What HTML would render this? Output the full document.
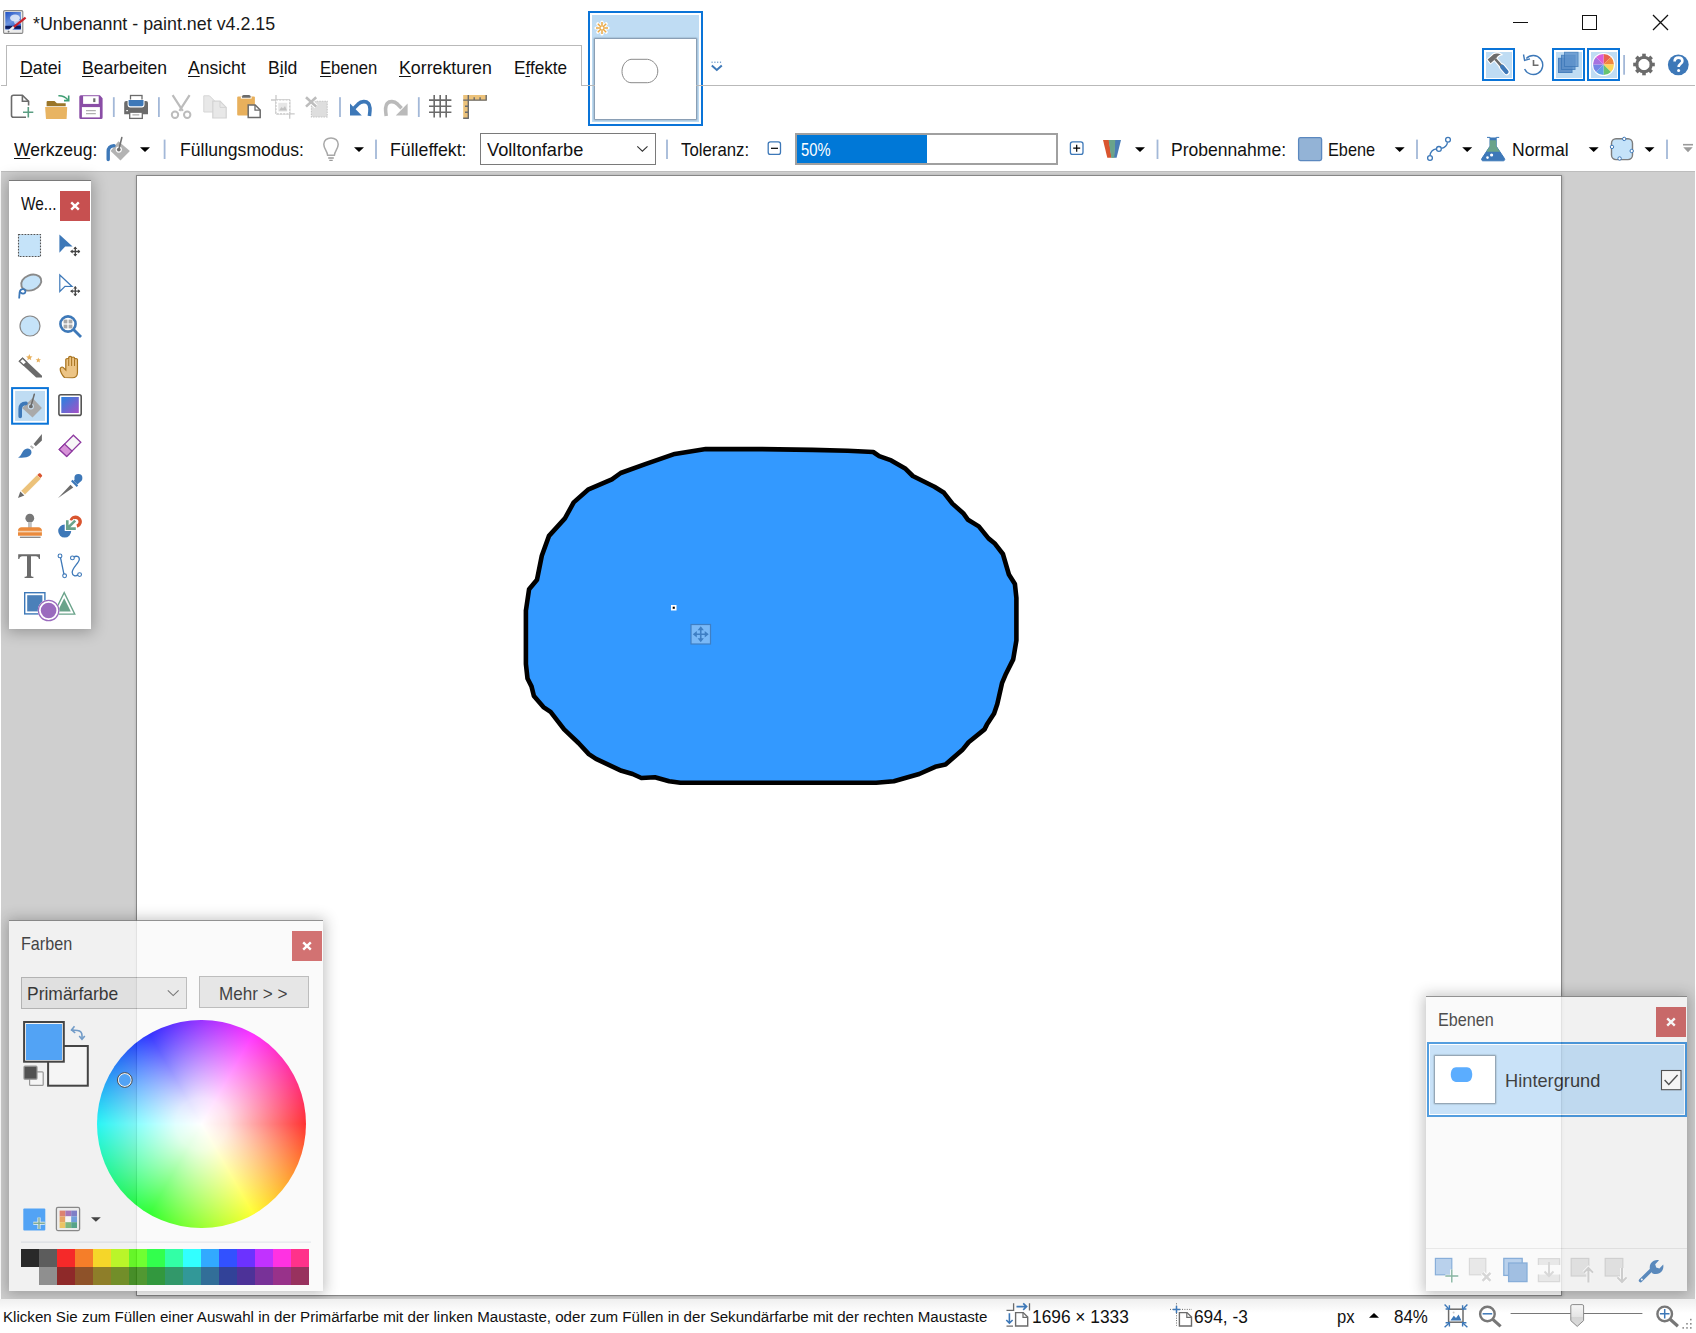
<!DOCTYPE html>
<html><head><meta charset="utf-8"><style>
*{margin:0;padding:0;box-sizing:border-box}
html,body{width:1696px;height:1333px;overflow:hidden;background:#fff}
body{position:relative;font-family:"Liberation Sans",sans-serif;color:#000}
.a{position:absolute}
.t{position:absolute;white-space:nowrap;line-height:1;font-size:17.5px}
.u{text-decoration:underline;text-underline-offset:2px;text-decoration-thickness:1px}
svg{position:absolute;overflow:visible}
</style></head><body>
<svg style="left:3px;top:10px;" width="21" height="24" viewBox="0 0 21 24">
<defs><linearGradient id="ico" x1="0" y1="0" x2="0.6" y2="1"><stop offset="0" stop-color="#1d4fc4"/><stop offset=".55" stop-color="#6c93de"/><stop offset="1" stop-color="#2a5ad0"/></linearGradient></defs>
<rect x="0.6" y="0.6" width="19.2" height="22.8" rx="1.2" fill="#ececec" stroke="#888" stroke-width="1.1"/>
<rect x="2.3" y="2" width="15.6" height="17.6" fill="url(#ico)"/>
<ellipse cx="12" cy="8" rx="5" ry="3.5" fill="#e8eefa" opacity=".85"/>
<ellipse cx="14.5" cy="12" rx="3.5" ry="2.5" fill="#dfe8f8" opacity=".7"/>
<rect x="2.3" y="15.8" width="15.6" height="3" fill="#0b1a5a"/>
<path d="M22.6 7.6L10.6 17.2" stroke="#c9222c" stroke-width="2.2"/>
<path d="M10.8 17L6 21.2" stroke="#f2f2f2" stroke-width="2.4"/>
<path d="M6.2 21L5 22.2" stroke="#777" stroke-width="1.6"/>
</svg>
<div class="t" style="left:32.70px;top:15.00px;font-size:18.2px;color:#1a1a1a;transform:scaleX(0.9818);transform-origin:0 0;">*Unbenannt - paint.net v4.2.15</div>
<div class="a" style="left:1513px;top:22px;width:15px;height:1.3px;background:#111"></div>
<div class="a" style="left:1582px;top:15px;width:15px;height:15px;border:1.3px solid #111"></div>
<svg style="left:1653px;top:15px;" width="15" height="15" viewBox="0 0 15 15"><path d="M0 0L15 15M15 0L0 15" stroke="#111" stroke-width="1.3"/></svg>
<div class="a" style="left:6px;top:45px;width:1px;height:41px;background:#b9b9b9"></div>
<div class="a" style="left:6px;top:45px;width:576px;height:1px;background:#b9b9b9"></div>
<div class="a" style="left:581px;top:45px;width:1px;height:41px;background:#b9b9b9"></div>
<div class="a" style="left:1px;top:85px;width:6px;height:1px;background:#b9b9b9"></div>
<div class="a" style="left:581px;top:85px;width:1114px;height:1px;background:#b9b9b9"></div>
<div class="t" style="left:20.00px;top:59.00px;font-size:18.2px;color:#111;transform:scaleX(0.9762);transform-origin:0 0;"><span class=u>D</span>atei</div>
<div class="t" style="left:82.00px;top:59.00px;font-size:18.2px;color:#111;transform:scaleX(0.9659);transform-origin:0 0;"><span class=u>B</span>earbeiten</div>
<div class="t" style="left:188.00px;top:59.00px;font-size:18.2px;color:#111;transform:scaleX(0.9667);transform-origin:0 0;"><span class=u>A</span>nsicht</div>
<div class="t" style="left:268.00px;top:59.00px;font-size:18.2px;color:#111;transform:scaleX(0.9667);transform-origin:0 0;">B<span class=u>i</span>ld</div>
<div class="t" style="left:319.50px;top:59.00px;font-size:18.2px;color:#111;transform:scaleX(0.9143);transform-origin:0 0;"><span class=u>E</span>benen</div>
<div class="t" style="left:398.50px;top:59.00px;font-size:18.2px;color:#111;transform:scaleX(0.9768);transform-origin:0 0;"><span class=u>K</span>orrekturen</div>
<div class="t" style="left:514.00px;top:59.00px;font-size:18.2px;color:#111;transform:scaleX(0.9429);transform-origin:0 0;">E<span class=u>f</span>fekte</div>
<svg style="left:0;top:0" width="1696" height="140" viewBox="0 0 1696 140">
<path d="M26 117.2H13.5a2 2 0 0 1-2-2V97.3a2 2 0 0 1 2-2H22.4L28.6 101.4V105.5" fill="none" stroke="#6b6b6b" stroke-width="1.6"/>
<path d="M22.4 95.3V101.2H28.6" fill="none" stroke="#6b6b6b" stroke-width="1.6"/>
<path d="M28.3 107.1V117.6M23 112.3H33.3" stroke="#5a9e82" stroke-width="1.6"/>
<path d="M46.6 106.2V102a1 1 0 0 1 1-1H54.5L56.9 103.3H65.7V106.2Z" fill="#9a7528"/>
<path d="M45.1 107.1H67.2L66.6 118.9H46Z" fill="#e8b462"/>
<path d="M58.4 95.8C62 95.6 64.5 96 67.8 99.8" fill="none" stroke="#3f9e74" stroke-width="1.6"/>
<path d="M64 100.6H68.7V95.6" fill="none" stroke="#3f9e74" stroke-width="1.6"/>
<path d="M80.8 95.3H99.9L102.6 98.3V117.4a1.5 1.5 0 0 1-1.5 1.5H80.8a1.5 1.5 0 0 1-1.5-1.5V96.8a1.5 1.5 0 0 1 1.5-1.5Z" fill="#8a4da6"/>
<rect x="83.1" y="96.2" width="15.6" height="7.7" fill="#fff"/>
<rect x="93.2" y="98.3" width="2.2" height="3.8" fill="#6b6b6b"/>
<rect x="81.9" y="107.1" width="18" height="10.3" fill="#fff"/>
<path d="M86 110.6H95.8M86 113.6H95.8" stroke="#b0b0b0" stroke-width="1.1"/>
<rect x="112.89999999999999" y="97.2" width="1.8" height="19.8" fill="#a3b8d8"/>
<rect x="158.0" y="97.2" width="1.8" height="19.8" fill="#a3b8d8"/>
<rect x="339.1" y="97.2" width="1.8" height="19.8" fill="#a3b8d8"/>
<rect x="417.90000000000003" y="97.2" width="1.8" height="19.8" fill="#a3b8d8"/>
<rect x="130.5" y="95.5" width="11.5" height="6" fill="#fff" stroke="#6b6b6b" stroke-width="1.3"/>
<path d="M124.2 103a2 2 0 0 1 2-2H146a2 2 0 0 1 2 2V114.2H124.2Z" fill="#6b6b6b"/>
<path d="M127.6 99.4H144.5V105a2.4 2.4 0 0 1-2.4 2.4H130a2.4 2.4 0 0 1-2.4-2.4Z" fill="#fff"/>
<path d="M128.6 100H143.5V104.6a1.6 1.6 0 0 1-1.6 1.6H130.2a1.6 1.6 0 0 1-1.6-1.6Z" fill="#3d78b8"/>
<rect x="129.7" y="112.2" width="12.6" height="6.2" fill="#fff" stroke="#6b6b6b" stroke-width="1.3"/>
<path d="M132.4 114.9H139.3" stroke="#9a9a9a" stroke-width="1"/>
<rect x="126.3" y="110" width="1.6" height="1.2" fill="#fff"/>
<path d="M172.6 95.2L182.8 110.8M189.6 95.2L179.4 110.8" stroke="#bcbcbc" stroke-width="2.2"/>
<circle cx="175" cy="114.8" r="3.2" fill="none" stroke="#bcbcbc" stroke-width="2"/>
<circle cx="187.2" cy="114.8" r="3.2" fill="none" stroke="#bcbcbc" stroke-width="2"/>
<path d="M203.8 95.8H209.5L215 101.3V112H203.8Z" fill="#e8e8e8" stroke="#d6d6d6" stroke-width="1"/>
<path d="M212.8 101.2H220L226.2 107.4V118H212.8Z" fill="#e8e8e8" stroke="#d3d3d3" stroke-width="1.2"/>
<path d="M220 101.2V107.4H226.2" fill="none" stroke="#d3d3d3" stroke-width="1"/>
<rect x="237.2" y="96.4" width="17.7" height="19.2" rx="1" fill="#e8b05c"/>
<path d="M240.8 96.6H251.6V98.6H240.8Z" fill="#fff"/>
<path d="M242 97.8V96.6a1.6 1.6 0 0 1 1.6-1.6H249a1.6 1.6 0 0 1 1.6 1.6V97.8Z" fill="#6b6b6b"/>
<path d="M248.2 105H255.2L260.2 110V117.6H248.2Z" fill="#fff" stroke="#6b6b6b" stroke-width="1.5"/>
<path d="M255 105V110.2H260.2" fill="none" stroke="#6b6b6b" stroke-width="1.3"/>
<path d="M276 95V114M271 100H290M289.7 100V118.8M276 113.8H294.7" stroke="#c9c9c9" stroke-width="1.3"/>
<rect x="276" y="100" width="13.7" height="13.8" fill="#fff" stroke="#c9c9c9" stroke-width="1.2" stroke-dasharray="2 1.2"/>
<rect x="278.3" y="102.8" width="9" height="8.7" fill="#e6e6e6"/>
<path d="M279 110.5L281.5 107L283 108.5L285 106L287 110.5Z" fill="#c2c2c2"/>
<rect x="311.4" y="101.2" width="15.8" height="15.8" fill="#dedede" stroke="#c6c6c6" stroke-width="1.1" stroke-dasharray="1.6 1"/>
<path d="M306 97.2L316.2 106.6M316.2 97.2L306 106.6" stroke="#fff" stroke-width="4.4"/>
<path d="M306 97.2L316.2 106.6M316.2 97.2L306 106.6" stroke="#bdbdbd" stroke-width="2.6"/>
<path d="M369.4 116C370.2 111 370.6 106 368.4 103.5C366 100.8 361.5 101 358 104.2L354 108.2" fill="none" stroke="#3d78b8" stroke-width="3.6"/>
<path d="M350 103.6V115.6H361.8Z" fill="#3d78b8"/>
<path d="M386.2 116C385.4 111 385 106 387.2 103.5C389.6 100.8 394.1 101 397.6 104.2L401.6 108.2" fill="none" stroke="#bababa" stroke-width="3.6"/>
<path d="M407.6 103.6V115.6H395.8Z" fill="#bababa"/>
<path d="M434.2 95V117.4M440.2 95V117.4M446.2 95V117.4M429 100.1H451.4M429 106.3H451.4M429 112.2H451.4" stroke="#6b6b6b" stroke-width="1.6"/>
<path d="M463.2 95H486.7V100.6H468.6V118.8H463.2Z" fill="#ecc27a"/>
<path d="M463.2 100.1H486.7M468.3 95V118.8M463.2 118.2H468.6M486.2 95V100.6M474.2 100.1V97.3M480.1 100.1V97.3M468.3 106.3H465M468.3 112.2H465" stroke="#6b6b6b" stroke-width="1.4" fill="none"/>
</svg>
<div class="a" style="left:588px;top:11px;width:115px;height:115px;border:2px solid #0a74d8;background:#fff"></div>
<div class="a" style="left:592px;top:15px;width:107px;height:107px;background:#bfdcf3"></div>
<div class="a" style="left:594.6px;top:39.4px;width:101.6px;height:79.8px;background:#fff;box-shadow:0 0 1.5px 0.8px rgba(60,70,90,.55)"></div>
<svg style="left:0;top:0" width="760" height="140" viewBox="0 0 760 140">
<g stroke="#fff" stroke-width="3.2" stroke-linecap="round"><path d="M602 22V34M596 28H608M597.8 23.8L606.2 32.2M606.2 23.8L597.8 32.2"/></g>
<g stroke="#e8a845" stroke-width="1.5"><path d="M602 22V34M596 28H608M597.8 23.8L606.2 32.2M606.2 23.8L597.8 32.2"/></g>
<circle cx="602" cy="28" r="1.4" fill="#fff"/>
<path d="M631 59.3H647.5C653 60 657.8 65 657.8 71C657.8 77.5 653 82.5 647.5 82.7H631C626 82.5 622 77.5 622 71.5C622 65 626 60 631 59.3Z" fill="#fff" stroke="#8a8a8a" stroke-width="1"/>
<path d="M711.5 62.2H722" stroke="#3d78b8" stroke-width="1" stroke-dasharray="1.2 1.6"/>
<path d="M711.8 65.5L716.8 70L721.8 65.5" fill="none" stroke="#3d78b8" stroke-width="2"/>
</svg>
<div class="a" style="left:1482px;top:48px;width:33px;height:33px;border:2px solid #0a74d8;background:#fff"></div>
<div class="a" style="left:1485.5px;top:51.5px;width:26px;height:26px;background:#bfdcf3"></div>
<div class="a" style="left:1552px;top:48px;width:33px;height:33px;border:2px solid #0a74d8;background:#fff"></div>
<div class="a" style="left:1555.5px;top:51.5px;width:26px;height:26px;background:#bfdcf3"></div>
<div class="a" style="left:1587px;top:48px;width:33px;height:33px;border:2px solid #0a74d8;background:#fff"></div>
<div class="a" style="left:1590.5px;top:51.5px;width:26px;height:26px;background:#bfdcf3"></div>
<svg style="left:1460px;top:40px" width="236" height="50" viewBox="1460 40 236 50">
<path d="M1487.6 59.6L1490.6 63.2L1494.8 59.6L1496.8 57.4C1498 55.6 1499.4 55 1501 54.6C1499 53.2 1496 53 1493.6 54.2L1491.4 56.2Z" fill="#fff" stroke="#fff" stroke-width="2"/>
<path d="M1495.2 59L1501.5 66.2" stroke="#fff" stroke-width="4.6"/><path d="M1502 66.6L1506.6 72" stroke="#fff" stroke-width="6.4" stroke-linecap="round"/>
<path d="M1487.6 59.6L1490.6 63.2L1494.8 59.6L1496.8 57.4C1498 55.6 1499.4 55 1501 54.6C1499 53.2 1496 53 1493.6 54.2L1491.4 56.2Z" fill="#6b6b6b"/>
<path d="M1495.2 59L1501.5 66.2" stroke="#6b6b6b" stroke-width="2.6"/>
<path d="M1502.2 66.8L1506.4 71.8" stroke="#3d78b8" stroke-width="4.4" stroke-linecap="round"/>
<path d="M1526.3 58.5A9.5 9.5 0 1 1 1524.6 69" fill="none" stroke="#3d78b8" stroke-width="1.4"/>
<path d="M1523.5 54.5L1524.6 60.4L1530 58.8" fill="none" stroke="#3d78b8" stroke-width="1.4"/>
<path d="M1533.5 60V65.3H1538.5" fill="none" stroke="#6b6b6b" stroke-width="1.6"/>
<rect x="1558.5" y="58.3" width="13.5" height="14.2" fill="#5a8bc4" stroke="#3d78b8" stroke-width="1" opacity=".9"/>
<rect x="1561.5" y="55.3" width="13.5" height="14.2" fill="#5b8fc9" stroke="#3d78b8" stroke-width="1" opacity=".85"/>
<rect x="1564.5" y="52.3" width="13.5" height="14.2" fill="#5f93cc" stroke="#3d78b8" stroke-width="1" opacity=".8"/>
<circle cx="1603.5" cy="64.5" r="11.5" fill="#fff"/>
<path d="M1603.5 64.5L1603.50 54.00A10.5 10.5 0 0 1 1610.92 57.08Z" fill="#e8624f"/>
<path d="M1603.5 64.5L1610.92 57.08A10.5 10.5 0 0 1 1614.00 64.50Z" fill="#f0883f"/>
<path d="M1603.5 64.5L1614.00 64.50A10.5 10.5 0 0 1 1610.92 71.92Z" fill="#fdd75a"/>
<path d="M1603.5 64.5L1610.92 71.92A10.5 10.5 0 0 1 1603.50 75.00Z" fill="#66c470"/>
<path d="M1603.5 64.5L1603.50 75.00A10.5 10.5 0 0 1 1596.08 71.92Z" fill="#5fa1e8"/>
<path d="M1603.5 64.5L1596.08 71.92A10.5 10.5 0 0 1 1593.00 64.50Z" fill="#7486e6"/>
<path d="M1603.5 64.5L1593.00 64.50A10.5 10.5 0 0 1 1596.08 57.08Z" fill="#a772df"/>
<path d="M1603.5 64.5L1596.08 57.08A10.5 10.5 0 0 1 1603.50 54.00Z" fill="#d85ddb"/>
<rect x="1623.2" y="55" width="1.8" height="19.7" fill="#a3b8d8"/>
<rect x="-1.8" y="-10.8" width="3.6" height="5" transform="translate(1644 64.5) rotate(0)" fill="#6b6b6b"/><rect x="-1.8" y="-10.8" width="3.6" height="5" transform="translate(1644 64.5) rotate(45)" fill="#6b6b6b"/><rect x="-1.8" y="-10.8" width="3.6" height="5" transform="translate(1644 64.5) rotate(90)" fill="#6b6b6b"/><rect x="-1.8" y="-10.8" width="3.6" height="5" transform="translate(1644 64.5) rotate(135)" fill="#6b6b6b"/><rect x="-1.8" y="-10.8" width="3.6" height="5" transform="translate(1644 64.5) rotate(180)" fill="#6b6b6b"/><rect x="-1.8" y="-10.8" width="3.6" height="5" transform="translate(1644 64.5) rotate(225)" fill="#6b6b6b"/><rect x="-1.8" y="-10.8" width="3.6" height="5" transform="translate(1644 64.5) rotate(270)" fill="#6b6b6b"/><rect x="-1.8" y="-10.8" width="3.6" height="5" transform="translate(1644 64.5) rotate(315)" fill="#6b6b6b"/>
<circle cx="1644" cy="64.5" r="7.2" fill="none" stroke="#6b6b6b" stroke-width="3"/>
<circle cx="1678.3" cy="64.8" r="10.4" fill="#3d78b8"/>
<path d="M1674.6 61.6C1674.6 59 1676.4 57.6 1678.5 57.6C1680.8 57.6 1682.4 59 1682.4 61C1682.4 63.8 1678.6 63.8 1678.6 67" fill="none" stroke="#fff" stroke-width="2.6"/>
<circle cx="1678.6" cy="70.6" r="1.5" fill="#fff"/>
</svg>
<div class="a" style="left:581px;top:85px;width:13.6px;height:1px;background:#b9b9b9"></div>
<div class="a" style="left:696.2px;top:85px;width:7px;height:1px;background:#b9b9b9"></div>
<div class="t" style="left:14.20px;top:141.00px;font-size:18.2px;color:#111;transform:scaleX(0.9621);transform-origin:0 0;"><span class=u>W</span>erkzeug:</div>
<div class="t" style="left:180.40px;top:141.00px;font-size:18.2px;color:#111;transform:scaleX(0.9656);transform-origin:0 0;">Füllungsmodus:</div>
<div class="t" style="left:390.00px;top:141.00px;font-size:18.2px;color:#111;transform:scaleX(0.9744);transform-origin:0 0;">Fülleffekt:</div>
<div class="t" style="left:680.70px;top:141.00px;font-size:18.2px;color:#111;transform:scaleX(0.9230);transform-origin:0 0;">Toleranz:</div>
<div class="t" style="left:1171.30px;top:141.00px;font-size:18.2px;color:#111;transform:scaleX(0.9639);transform-origin:0 0;">Probennahme:</div>
<div class="t" style="left:1328.30px;top:141.00px;font-size:18.2px;color:#111;transform:scaleX(0.8962);transform-origin:0 0;">Ebene</div>
<div class="t" style="left:1512.00px;top:141.00px;font-size:18.2px;color:#111;transform:scaleX(0.9661);transform-origin:0 0;">Normal</div>
<div class="a" style="left:480px;top:133px;width:176px;height:32px;border:1px solid #7a7a7a;background:#fff"></div>
<div class="t" style="left:486.50px;top:141.00px;font-size:18.2px;color:#111;transform:scaleX(1.0031);transform-origin:0 0;">Volltonfarbe</div>
<div class="a" style="left:795px;top:133px;width:263px;height:32px;border:2px solid #a0a0a0;background:#fff"></div>
<div class="a" style="left:797px;top:135px;width:129.5px;height:28px;background:#0078d7"></div>
<div class="t" style="left:800.80px;top:141.00px;font-size:18.2px;color:#fff;transform:scaleX(0.8111);transform-origin:0 0;">50%</div>
<svg style="left:0;top:0" width="1696" height="170" viewBox="0 0 1696 170">
<path d="M637.3 146.3L642.4 151.2L647.5 146.3" fill="none" stroke="#333" stroke-width="1.1"/>
<path d="M110.6 150.9L118.4 141.3L129.9 150.9L120.5 160.6Z" fill="#b3b3b3"/>
<path d="M108.2 159.5V151.5C108.2 148 110.5 146 114 145.6" fill="none" stroke="#3d78b8" stroke-width="3.4" stroke-linecap="round"/>
<circle cx="118.8" cy="149.6" r="3.1" fill="#fff"/>
<path d="M121.8 137.6L118.8 149.6" stroke="#707070" stroke-width="1.6" stroke-linecap="round"/>
<circle cx="118.8" cy="149.6" r="1.9" fill="#707070"/>
<path d="M140 147.2H150L145 151.9Z" fill="#000"/>
<path d="M354 147.2H364L359 151.9Z" fill="#000"/>
<path d="M1135 147.2H1145L1140 151.9Z" fill="#000"/>
<path d="M1394.7 147.2H1404.7L1399.7 151.9Z" fill="#000"/>
<path d="M1462.2 147.2H1472.2L1467.2 151.9Z" fill="#000"/>
<path d="M1588.7 147.2H1598.7L1593.7 151.9Z" fill="#000"/>
<path d="M1644.5 147.2H1654.5L1649.5 151.9Z" fill="#000"/>
<rect x="163.7" y="139.6" width="1.8" height="19.4" fill="#a3b8d8"/>
<rect x="375.1" y="139.6" width="1.8" height="19.4" fill="#a3b8d8"/>
<rect x="666.1" y="139.6" width="1.8" height="19.4" fill="#a3b8d8"/>
<rect x="1156.6" y="139.6" width="1.8" height="19.4" fill="#a3b8d8"/>
<rect x="1416.1" y="139.6" width="1.8" height="19.4" fill="#a3b8d8"/>
<rect x="1666.1" y="139.6" width="1.8" height="19.4" fill="#a3b8d8"/>
<path d="M327.6 155.3C327.3 151 323.8 149 323.8 144.3C323.8 140.5 327 137.9 331 137.9C335 137.9 338.2 140.5 338.2 144.3C338.2 149 334.7 151 334.4 155.3Z" fill="#fff" stroke="#a8a8a8" stroke-width="1.5"/>
<path d="M328.2 158H333.8M329.3 160.3H332.7" stroke="#9a9a9a" stroke-width="1.3"/>
<rect x="768.2" y="141.8" width="12.3" height="12.6" rx="2.2" fill="#fff" stroke="#3d78b8" stroke-width="1.3"/>
<path d="M771 148.3H778" stroke="#000" stroke-width="1.2"/>
<rect x="1070.4" y="141.8" width="12.6" height="12.6" rx="2.2" fill="#fff" stroke="#3d78b8" stroke-width="1.3"/>
<path d="M1073.2 148.2H1080.2M1076.7 144.7V151.7" stroke="#000" stroke-width="1.2"/>
<path d="M1103 140.1H1109L1111.6 157.7H1107.3Z" fill="#d9552f"/>
<path d="M1109 140.1H1115L1113.8 157.7H1111.6Z" fill="#6aa38a"/>
<path d="M1115 140.1H1121L1116.6 157.7H1113.8Z" fill="#4a7db5"/>
<path d="M1108.6 140.1H1115.3L1114.3 157.7H1111.3Z" fill="#6aa38a"/>
<rect x="1298.6" y="137.6" width="23" height="23" rx="1.8" fill="#93b3d6" stroke="#5b88bf" stroke-width="1.3"/>
<path d="M1430 155.4C1430.5 151.5 1433 149.5 1436.4 148.9M1441.4 148.4C1445 147.5 1447 145.5 1447.5 142.3" fill="none" stroke="#3d78b8" stroke-width="1.3"/>
<circle cx="1430" cy="158" r="2.4" fill="#fff" stroke="#3d78b8" stroke-width="1.3"/>
<circle cx="1438.9" cy="148.9" r="2.4" fill="#fff" stroke="#3d78b8" stroke-width="1.3"/>
<circle cx="1448" cy="139.7" r="2.4" fill="#fff" stroke="#3d78b8" stroke-width="1.3"/>
<path d="M1487 137.4H1490V146.2L1481.8 158.6C1481.2 159.8 1481.8 160.8 1483 160.8H1503.3C1504.5 160.8 1505.1 159.8 1504.5 158.6L1496.2 146.2V137.4H1499.2" fill="#3d78b8" stroke="#3d78b8" stroke-width="1"/>
<path d="M1489.9 140.2H1496.3V146.3L1500 151.8H1486.2L1489.9 146.3Z" fill="#6aa38a"/>
<circle cx="1491.6" cy="155" r="1.6" fill="#fff"/><circle cx="1487.5" cy="157.6" r="1.3" fill="#fff"/>
<rect x="1611.5" y="138.8" width="21" height="20.8" rx="4.5" fill="#c5e3f9" stroke="#7d7d7d" stroke-width="1.4"/>
<circle cx="1624.2" cy="138.9" r="1.7" fill="#fff" stroke="#3d78b8" stroke-width="1"/>
<circle cx="1612" cy="146.9" r="1.7" fill="#fff" stroke="#3d78b8" stroke-width="1"/>
<circle cx="1631.7" cy="151" r="1.7" fill="#fff" stroke="#3d78b8" stroke-width="1"/>
<circle cx="1619.6" cy="158.5" r="1.7" fill="#fff" stroke="#3d78b8" stroke-width="1"/>
<rect x="1683" y="143.9" width="10" height="1.6" fill="#9a9a9a"/><path d="M1683.3 147.2H1692.7L1688 152.2Z" fill="#9a9a9a"/>
</svg>
<div class="a" style="left:1px;top:171px;width:1694px;height:1127.5px;background:#cfcfcf"></div>
<div class="a" style="left:1px;top:171px;width:1694px;height:1px;background:#bdbdbd"></div>
<div class="a" style="left:137px;top:176px;width:1424px;height:1119px;background:#fff;box-shadow:0 0 0 1px #868686, 0 0 3px 1.5px rgba(0,0,0,.22)"></div>
<svg style="left:0;top:0" width="1696" height="1333" viewBox="0 0 1696 1333"><path d="M705.8 449.1L760.0 449.1L812.5 449.9L847.6 450.7L873.2 452.0L879.2 456.2L891.2 460.4L905.6 468.8L912.8 476.0L934.4 486.8L944.0 492.8L952.4 503.6L963.2 513.2L968.0 519.8L978.8 526.4L988.5 538.4L994.5 543.2L1002.9 554.0L1008.9 574.5L1014.9 584.0L1016.4 598.0L1016.4 640.3L1013.2 659.4L1006.0 673.7L1002.0 683.2L997.3 704.0L994.1 713.5L986.9 724.6L984.5 729.4L968.6 742.2L962.2 750.1L945.5 764.5L935.2 766.8L919.2 774.0L893.8 781.2L876.2 782.8L680.4 782.8L669.2 781.2L654.9 777.2L641.4 778.0L632.6 774.0L621.5 770.8L596.0 758.9L588.8 754.1L578.5 743.0L564.1 729.4L550.6 711.9L543.4 707.1L533.9 696.0L531.5 686.4L527.5 678.5L525.9 664.1L525.9 610.0L526.0 610.0L529.1 589.2L537.0 579.7L541.8 555.8L549.0 535.9L564.9 518.4L573.7 502.4L588.0 489.7L611.9 479.4L620.7 473.0L645.3 464.2L674.8 453.9Z" fill="#3399ff" stroke="#000" stroke-width="4.6" stroke-linejoin="round"/>
<rect x="671" y="605" width="5.5" height="5.5" fill="#fff"/><rect x="672.7" y="606.7" width="2.1" height="2.1" fill="#000"/>
<rect x="691" y="624.5" width="19.5" height="19.5" fill="#7ab9f7" stroke="#3f7fc4" stroke-width="1.2"/>
<path d="M700.75 628V640.5M694.5 634.25H707" stroke="#3f7fc4" stroke-width="1.6"/>
<path d="M700.75 626.3L697.6 630.3H703.9Z M700.75 642.2L697.6 638.2H703.9Z M692.8 634.25L696.8 631.1V637.4Z M708.7 634.25L704.7 631.1V637.4Z" fill="#3f7fc4"/>
</svg>
<div class="a" style="left:9px;top:180px;width:82px;height:448.7px;background:#fff;box-shadow:0 1px 14px 2px rgba(0,0,0,.28);border-top:1px solid #7a7a7a"></div>
<div class="t" style="left:20.60px;top:195.00px;font-size:18.2px;color:#111;transform:scaleX(0.8429);transform-origin:0 0;">We...</div>
<div class="a" style="left:60px;top:191px;width:30px;height:30px;background:#c75050"></div>
<svg style="left:0;top:0" width="100" height="640" viewBox="0 0 100 640">
<path d="M71.2 202.4L78.8 209.6M78.8 202.4L71.2 209.6" stroke="#fff" stroke-width="2.4"/>
<rect x="18.5" y="234.5" width="22" height="22" fill="#c5e3f9" stroke="#555" stroke-width="1.1" stroke-dasharray="1.8 1.2"/>
<path d="M59.4 234.6L72.6 246.6H65.2L59.4 252.8Z" fill="#3d78b8"/>
<path d="M75.3 246.9V256.1M70.7 251.5H79.89999999999999" stroke="#444" stroke-width="1.3"/><path d="M75.3 246.5L73.3 248.9H77.3Z M75.3 256.5L73.3 254.1H77.3Z M70.3 251.5L72.7 249.5V253.5Z M80.3 251.5L77.89999999999999 249.5V253.5Z" fill="#444"/>
<ellipse cx="31.2" cy="282.6" rx="10.4" ry="7.6" transform="rotate(-22 31.2 282.6)" fill="#c5e3f9" stroke="#8a8a8a" stroke-width="1.9"/>
<path d="M19.2 297.8L19.6 292.6C19.8 290 21.6 288.8 23.4 289.2C25.4 289.6 26 291.6 25 292.8C24 294 22 293.8 20.8 292.6" fill="none" stroke="#3d78b8" stroke-width="1.8" stroke-linecap="round"/>
<path d="M59.8 275L72 286.5L65 286.4L59.8 291.5Z" fill="#fff" stroke="#3d78b8" stroke-width="1.2"/>
<path d="M75.3 286.59999999999997V295.8M70.7 291.2H79.89999999999999" stroke="#444" stroke-width="1.3"/><path d="M75.3 286.2L73.3 288.59999999999997H77.3Z M75.3 296.2L73.3 293.8H77.3Z M70.3 291.2L72.7 289.2V293.2Z M80.3 291.2L77.89999999999999 289.2V293.2Z" fill="#444"/>
<circle cx="30" cy="326" r="10" fill="#c5e3f9" stroke="#888" stroke-width="1.2"/>
<circle cx="68" cy="324" r="7.6" fill="#fff" stroke="#3d78b8" stroke-width="2.6"/>
<rect x="63.6" y="319.6" width="3.8" height="3.8" fill="#a8a8a8"/><rect x="68.6" y="319.6" width="3.8" height="3.8" fill="#a8a8a8"/><rect x="63.6" y="324.6" width="3.8" height="3.8" fill="#a8a8a8"/><rect x="68.6" y="324.6" width="3.8" height="3.8" fill="#a8a8a8"/>
<path d="M73.5 329.5L81 337" stroke="#3d78b8" stroke-width="2.8" stroke-linecap="butt"/>
<path d="M18.6 361.2L22.6 357.4L42 375.8V377.6H36.2Z" fill="#6b6b6b"/>
<path d="M19.4 361.2L22.6 358.2L26.8 362.2L23.6 365.2Z" fill="#fff" stroke="#6b6b6b" stroke-width="1.3"/>
<path d="M29.30 354.10L30.20 356.26L32.53 356.45L30.76 357.97L31.30 360.25L29.30 359.03L27.30 360.25L27.84 357.97L26.07 356.45L28.40 356.26Z" fill="#e8b05c"/>
<path d="M38.30 357.40L39.04 359.18L40.96 359.33L39.50 360.59L39.95 362.47L38.30 361.46L36.65 362.47L37.10 360.59L35.64 359.33L37.56 359.18Z" fill="#e8b05c"/>
<g transform="translate(60.2 0) scale(1.12 1) translate(-60.2 0)">
<path d="M64 377.5C62 375.5 60 371 60.2 368.8C60.5 367 62 366.6 63 367.6L65.2 370V359.5C65.2 358.2 67.8 358.2 67.8 359.5V357.5C67.8 356 70.4 356 70.4 357.5V358C70.4 356.6 73 356.6 73 358V359.5C73 358.2 75.6 358.2 75.6 359.5V372.5C75.6 375.5 74 377.7 71 377.8Z" fill="#ecc485" stroke="#a87420" stroke-width="1.1"/>
<path d="M67.8 359.5V366M70.4 358V366M73 359.5V366" stroke="#a87420" stroke-width="0.9"/>
</g>
<rect x="12.1" y="388.1" width="35.8" height="35.6" fill="#fff" stroke="#0a74d8" stroke-width="2"/>
<rect x="15.1" y="390.9" width="29.9" height="30" fill="#bfdcf3"/>
<path d="M22.1 408L32.5 398.1L41.9 408L32.5 417.5Z" fill="#a9a9a9"/>
<path d="M20.2 416.5V409C20.2 405 22.3 403.6 26 403.4" fill="none" stroke="#3d78b8" stroke-width="3.6" stroke-linecap="round"/>
<circle cx="30.9" cy="406.4" r="3" fill="#c9def0"/>
<path d="M34.3 394.3L30.9 406.4" stroke="#6b6b6b" stroke-width="1.5" stroke-linecap="round"/><circle cx="30.9" cy="406.4" r="1.9" fill="#6b6b6b"/>
<defs><linearGradient id="gr" x1="0" y1="0" x2="1" y2="1"><stop offset="0" stop-color="#2583e0"/><stop offset="1" stop-color="#a64fc6"/></linearGradient></defs>
<rect x="58.9" y="394.8" width="22.3" height="20.6" rx="2" fill="#fff" stroke="#555" stroke-width="1.6"/>
<rect x="61.3" y="397" width="17.5" height="16" fill="url(#gr)"/>
<path d="M33.6 444L41.9 434.1V440.5L35.8 446.2Z" fill="#6b6b6b"/>
<path d="M31.3 445.2L34 447.6L32.6 449L29.9 446.6Z" fill="#b5b5b5"/>
<path d="M18 457.5C20.5 456.5 21.5 453.5 23 451.2C24.8 448.5 28 447.8 30 449.2C32 450.7 32 453.7 30 455.6C27.5 457.8 22 458 18 457.5Z" fill="#3d78b8"/>
<path d="M59.3 449.4L73.4 435.2L80.8 442.2L66.7 456.4Z" fill="#f7f7f7" stroke="#8e3aa0" stroke-width="1.3"/>
<path d="M59.3 449.4L64.6 444.1L72 451.1L66.7 456.4Z" fill="#d792d8" stroke="#8e3aa0" stroke-width="1.3"/>
<path d="M18 497.9L20.3 491.5L24.3 495.5Z" fill="#6b6b6b"/>
<path d="M21 490.8L37 474.8L41 478.8L25 494.8Z" fill="#ecc27a" stroke="#fff" stroke-width=".6"/>
<path d="M37.3 475.1L38.8 473.6C39.3 473.1 40 473.1 40.5 473.6L41.8 474.9C42.3 475.4 42.3 476.1 41.8 476.6L40.3 478.1Z" fill="#d9552f"/>
<path d="M58.1 497.9L70.56 484.76L73.24 487.44Z" fill="#6b6b6b"/>
<path d="M70.99 481.35L76.65 487.01L78.21 485.45L72.55 479.79Z" fill="#3d78b8"/>
<path d="M73.6 480.8L77.4 484.6L80.6 481.4L76.8 477.6Z" fill="#3d78b8"/>
<circle cx="78.4" cy="478" r="4" fill="#3d78b8"/>
<circle cx="29.8" cy="518.2" r="4.4" fill="#777"/>
<rect x="28" y="522" width="3.8" height="6" fill="#c0c0c0"/>
<path d="M18 535.7V530.5C18 528.5 19.5 527.2 21.5 527.2H38.4C40.4 527.2 41.9 528.5 41.9 530.5V535.7Z" fill="#ea8a3c"/>
<rect x="18" y="530.8" width="23.9" height="1.6" fill="#f6d2b0"/>
<rect x="19.9" y="536.6" width="20.7" height="1.4" fill="#8a8a8a"/>
<path d="M71.2 520.4A4.6 4.6 0 1 1 76.9 526.2" fill="none" stroke="#d9552f" stroke-width="3.4"/>
<path d="M64.7 524.6A6.5 6.5 0 1 0 71.2 531.1H64.7Z" fill="#3d78b8"/>
<path d="M67.4 528.4L75.4 520.4M67.3 520.2V528.6H75.8" fill="none" stroke="#fff" stroke-width="4.6"/>
<path d="M67.6 528.2L75.2 520.6M67.3 520.2V528.6H75.8" fill="none" stroke="#6aa38a" stroke-width="2.6"/>
<path d="M18.2 554.3H40V559H38.9C38.5 557 37.8 556.2 35.8 556.2H31V575.2C31 576.4 31.8 576.8 33.4 576.8V578H24.6V576.8C26.2 576.8 27 576.4 27 575.2V556.2H22.4C20.4 556.2 19.7 557 19.3 559H18.2Z" fill="#6b6b6b"/>
<path d="M60.3 556.6L64 574.4" stroke="#3d78b8" stroke-width="1.3"/>
<path d="M73.4 557.5C76 555.4 79.5 556 79.3 559.5C79 563 72 568 72.2 572.5C72.4 576 75.5 576.6 78.2 574.9" fill="none" stroke="#3d78b8" stroke-width="1.3"/>
<circle cx="60" cy="555.9" r="1.9" fill="#fff" stroke="#3d78b8" stroke-width="1.1"/>
<circle cx="64.6" cy="575.8" r="1.9" fill="#fff" stroke="#3d78b8" stroke-width="1.1"/>
<circle cx="72.4" cy="557.9" r="1.9" fill="#fff" stroke="#3d78b8" stroke-width="1.1"/>
<circle cx="79.6" cy="574.6" r="1.9" fill="#fff" stroke="#3d78b8" stroke-width="1.1"/>
<rect x="24.7" y="592.7" width="20.2" height="21.2" fill="#fff" stroke="#3d78b8" stroke-width="1.4"/>
<rect x="27.2" y="595.2" width="15.2" height="16.2" fill="#4b80b9"/>
<path d="M64.2 592.6L53.6 614.2H74.8Z" fill="#fff" stroke="#6aa38a" stroke-width="1.3"/>
<path d="M64.2 598.2L57.6 611.6H70.8Z" fill="#6aa38a"/>
<circle cx="48.6" cy="610.5" r="10.8" fill="#fff"/>
<circle cx="48.6" cy="610.5" r="10.2" fill="none" stroke="#9a6bbe" stroke-width="1.2"/>
<circle cx="48.6" cy="610.5" r="7.8" fill="#9a6bbe"/>
</svg>
<div class="a" style="left:0;top:0;width:1696px;height:1333px;opacity:.8">
<div class="a" style="left:8.8px;top:920px;width:314.2px;height:370.8px;background:#fafafa;box-shadow:0 1px 13px 2px rgba(0,0,0,.31);border-top:1px solid #777"></div>
<div class="t" style="left:20.80px;top:935.00px;font-size:18.2px;color:#222;transform:scaleX(0.8879);transform-origin:0 0;">Farben</div>
<div class="a" style="left:292px;top:931px;width:30px;height:30px;background:#c75050"></div>
<svg style="left:0;top:0" width="340" height="1333" viewBox="0 0 340 1333">
<path d="M303.2 942.4L310.8 949.6M310.8 942.4L303.2 949.6" stroke="#fff" stroke-width="2.4"/>
</svg>
<div class="a" style="left:21px;top:977px;width:166px;height:32px;background:#e5e5e5;border:1px solid #adadad"></div>
<div class="t" style="left:26.80px;top:985.00px;font-size:18.2px;color:#111;transform:scaleX(0.9600);transform-origin:0 0;">Primärfarbe</div>
<div class="a" style="left:199px;top:976px;width:110px;height:31.5px;background:#e1e1e1;border:1px solid #adadad"></div>
<div class="t" style="left:219.00px;top:985.00px;font-size:18.2px;color:#111;transform:scaleX(0.9397);transform-origin:0 0;">Mehr &gt; &gt;</div>
<div class="a" style="left:97.2px;top:1020.1px;width:208.4px;height:208.4px;border-radius:50%;background:conic-gradient(from 90deg,#f00,#ff0,#0f0,#0ff,#00f,#f0f,#f00)"></div>
<div class="a" style="left:97.2px;top:1020.1px;width:208.4px;height:208.4px;border-radius:50%;background:radial-gradient(circle closest-side,#fff 0%,rgba(255,255,255,.85) 25%,rgba(255,255,255,0) 100%)"></div>
<svg style="left:0;top:0" width="340" height="1333" viewBox="0 0 340 1333">
<circle cx="124.8" cy="1080" r="6.6" fill="#3399ff" stroke="#fff" stroke-width="1.2"/><circle cx="124.8" cy="1080" r="7.4" fill="none" stroke="#333" stroke-width="1"/>
<rect x="48.1" y="1046" width="39.7" height="39.7" fill="#fff" stroke="#222" stroke-width="2"/>
<rect x="50.1" y="1048" width="35.7" height="35.7" fill="#fff"/>
<rect x="24.1" y="1022" width="39.7" height="39.7" fill="#fff" stroke="#222" stroke-width="2"/>
<rect x="26" y="1024" width="36" height="36" fill="#3399ff"/>
<path d="M73 1028.6L72 1030L77.5 1030.5C80.5 1030.8 82 1032.5 82 1035.5V1038" fill="none" stroke="#5b8fc6" stroke-width="1.6"/>
<path d="M74.5 1026.3L71.6 1029.8L75.2 1033M79.2 1036L82 1039.2L84.8 1036" fill="none" stroke="#5b8fc6" stroke-width="1.6"/>
<rect x="29.6" y="1071.8" width="13.6" height="13.6" rx="1" fill="#fff" stroke="#8a8a8a" stroke-width="1.2"/>
<rect x="24" y="1066.2" width="13" height="13" rx="1" fill="#333" stroke="#888" stroke-width="1.2"/>
<rect x="23.3" y="1208.5" width="22" height="22" rx="1" fill="#3399ff"/>
<path d="M39 1217.5V1229M33.3 1223.2H44.8" stroke="#fff" stroke-width="3"/><path d="M39 1217.5V1229M33.3 1223.2H44.8" stroke="#6aa38a" stroke-width="1.4"/>
<rect x="56.4" y="1207.4" width="23.2" height="23.2" rx="1.5" fill="#f4f4f4" stroke="#777" stroke-width="1.3"/>
<rect x="59.6" y="1210.6" width="5.8" height="5.8" fill="#e0705a"/>
<rect x="65.4" y="1210.6" width="5.8" height="5.8" fill="#9a62b4"/>
<rect x="71.2" y="1210.6" width="5.8" height="5.8" fill="#6a6ac4"/>
<rect x="59.6" y="1216.4" width="5.8" height="5.8" fill="#ee9a4a"/>
<rect x="65.4" y="1216.4" width="5.8" height="5.8" fill="#fff"/>
<rect x="71.2" y="1216.4" width="5.8" height="5.8" fill="#5a94e0"/>
<rect x="59.6" y="1222.2" width="5.8" height="5.8" fill="#f4c24a"/>
<rect x="65.4" y="1222.2" width="5.8" height="5.8" fill="#6ab06a"/>
<rect x="71.2" y="1222.2" width="5.8" height="5.8" fill="#3a9a7a"/>
<path d="M91 1217.3H100.8L95.9 1221.8Z" fill="#222"/>
<path d="M167.8 990.4L173.2 995.6L178.6 990.4" fill="none" stroke="#555" stroke-width="1.1"/>
<rect x="21" y="1241.6" width="290" height="1" fill="#d7dde3"/>
</svg>
<div class="a" style="left:21px;top:1249px;width:18px;height:17.9px;background:#000000"></div><div class="a" style="left:39px;top:1249px;width:18px;height:17.9px;background:#404040"></div><div class="a" style="left:57px;top:1249px;width:18px;height:17.9px;background:#FF0000"></div><div class="a" style="left:75px;top:1249px;width:18px;height:17.9px;background:#FF6A00"></div><div class="a" style="left:93px;top:1249px;width:18px;height:17.9px;background:#FFD800"></div><div class="a" style="left:111px;top:1249px;width:18px;height:17.9px;background:#B6FF00"></div><div class="a" style="left:129px;top:1249px;width:18px;height:17.9px;background:#4CFF00"></div><div class="a" style="left:147px;top:1249px;width:18px;height:17.9px;background:#00FF21"></div><div class="a" style="left:165px;top:1249px;width:18px;height:17.9px;background:#00FF90"></div><div class="a" style="left:183px;top:1249px;width:18px;height:17.9px;background:#00FFFF"></div><div class="a" style="left:201px;top:1249px;width:18px;height:17.9px;background:#0094FF"></div><div class="a" style="left:219px;top:1249px;width:18px;height:17.9px;background:#0026FF"></div><div class="a" style="left:237px;top:1249px;width:18px;height:17.9px;background:#4800FF"></div><div class="a" style="left:255px;top:1249px;width:18px;height:17.9px;background:#B200FF"></div><div class="a" style="left:273px;top:1249px;width:18px;height:17.9px;background:#FF00DC"></div><div class="a" style="left:291px;top:1249px;width:18px;height:17.9px;background:#FF006E"></div><div class="a" style="left:39px;top:1266.9px;width:18px;height:17.9px;background:#808080"></div><div class="a" style="left:57px;top:1266.9px;width:18px;height:17.9px;background:#7F0000"></div><div class="a" style="left:75px;top:1266.9px;width:18px;height:17.9px;background:#7F3300"></div><div class="a" style="left:93px;top:1266.9px;width:18px;height:17.9px;background:#7F6A00"></div><div class="a" style="left:111px;top:1266.9px;width:18px;height:17.9px;background:#5B7F00"></div><div class="a" style="left:129px;top:1266.9px;width:18px;height:17.9px;background:#267F00"></div><div class="a" style="left:147px;top:1266.9px;width:18px;height:17.9px;background:#007F0E"></div><div class="a" style="left:165px;top:1266.9px;width:18px;height:17.9px;background:#007F46"></div><div class="a" style="left:183px;top:1266.9px;width:18px;height:17.9px;background:#007F7F"></div><div class="a" style="left:201px;top:1266.9px;width:18px;height:17.9px;background:#004A7F"></div><div class="a" style="left:219px;top:1266.9px;width:18px;height:17.9px;background:#00137F"></div><div class="a" style="left:237px;top:1266.9px;width:18px;height:17.9px;background:#21007F"></div><div class="a" style="left:255px;top:1266.9px;width:18px;height:17.9px;background:#57007F"></div><div class="a" style="left:273px;top:1266.9px;width:18px;height:17.9px;background:#7F006E"></div><div class="a" style="left:291px;top:1266.9px;width:18px;height:17.9px;background:#7F0037"></div>
</div>
<div class="a" style="left:0;top:0;width:1696px;height:1333px;opacity:.8">
<div class="a" style="left:1425.7px;top:996.3px;width:261.6px;height:294.7px;background:#fafafa;box-shadow:0 1px 13px 2px rgba(0,0,0,.31);border-top:1px solid #777"></div>
<div class="t" style="left:1438.00px;top:1011.00px;font-size:18.2px;color:#222;transform:scaleX(0.8905);transform-origin:0 0;">Ebenen</div>
<div class="a" style="left:1656px;top:1007px;width:30px;height:30px;background:#c75050"></div>
<div class="a" style="left:1426.6px;top:1041.6px;width:260.1px;height:75.7px;border:2px solid #2a86d8;background:#fff"></div>
<div class="a" style="left:1429.6px;top:1044.6px;width:254.1px;height:69.7px;background:#bcdcf7"></div>
<div class="a" style="left:1434.7px;top:1055.6px;width:60.6px;height:47.7px;background:#fff;box-shadow:0 0 1.5px .6px rgba(0,0,0,.45)"></div>
<div class="t" style="left:1504.70px;top:1072.00px;font-size:18.2px;color:#111;transform:scaleX(1.0032);transform-origin:0 0;">Hintergrund</div>
<div class="a" style="left:1425.7px;top:1248px;width:261.6px;height:1px;background:#e3e3e3"></div>
<svg style="left:1400px;top:990px" width="296" height="300" viewBox="1400 990 296 300">
<path d="M1667.2 1018.4L1674.8 1025.6M1674.8 1018.4L1667.2 1025.6" stroke="#fff" stroke-width="2.4"/>
<path d="M1456 1067.3H1467C1470 1067.3 1472.2 1070 1472.2 1074.6C1472.2 1079.2 1470 1081.9 1467 1081.9H1456C1453 1081.9 1450.8 1079.2 1450.8 1074.6C1450.8 1070 1453 1067.3 1456 1067.3Z" fill="#3399ff"/>
<rect x="1661.5" y="1070.5" width="19.5" height="19.2" fill="#fff" stroke="#333" stroke-width="1.1"/>
<path d="M1664.6 1080L1668.8 1084.4L1677.6 1075" fill="none" stroke="#333" stroke-width="1.4"/>
<rect x="1435.4" y="1258.4" width="16.4" height="16.4" fill="#a8c6e8" stroke="#6b9bd0" stroke-width="1.2"/>
<path d="M1451.8 1269.5V1282.6M1445.3 1276H1458.3" stroke="#fff" stroke-width="3.2"/><path d="M1451.8 1269.5V1282.6M1445.3 1276H1458.3" stroke="#6aa38a" stroke-width="1.4"/>
<rect x="1469.4" y="1258.4" width="16.4" height="16.4" fill="#e3e3e3" stroke="#d0d0d0" stroke-width="1.2"/>
<path d="M1482.5 1272.8L1490.5 1280.8M1490.5 1272.8L1482.5 1280.8" stroke="#fff" stroke-width="4.2"/><path d="M1482.5 1272.8L1490.5 1280.8M1490.5 1272.8L1482.5 1280.8" stroke="#cdcdcd" stroke-width="2.6"/>
<rect x="1503.8" y="1258.4" width="18.4" height="17" fill="#a8c6e8" stroke="#6b9bd0" stroke-width="1.3"/>
<rect x="1508.6" y="1263" width="18.4" height="18.6" fill="#8ab0dc" stroke="#6b9bd0" stroke-width="1.3"/>
<path d="M1538.4 1265V1258.6H1559.6V1265M1538.4 1274.4V1281.6H1559.6V1274.4" fill="#e3e3e3" stroke="#d0d0d0" stroke-width="1.3"/>
<path d="M1549 1262V1276M1544.5 1271.5L1549 1276L1553.5 1271.5" fill="none" stroke="#cfcfcf" stroke-width="2"/>
<rect x="1571.2" y="1258.4" width="17.6" height="17.6" fill="#e3e3e3" stroke="#d0d0d0" stroke-width="1.2"/>
<path d="M1588.4 1268V1282.5M1583.8 1272.6L1588.4 1268L1593 1272.6" fill="none" stroke="#fff" stroke-width="4"/><path d="M1588.4 1268V1282.5M1583.8 1272.6L1588.4 1268L1593 1272.6" fill="none" stroke="#cdcdcd" stroke-width="2"/>
<rect x="1605.2" y="1258.4" width="17.6" height="17.6" fill="#e3e3e3" stroke="#d0d0d0" stroke-width="1.2"/>
<path d="M1622 1268V1282M1617.4 1277.4L1622 1282L1626.6 1277.4" fill="none" stroke="#fff" stroke-width="4"/><path d="M1622 1268V1282M1617.4 1277.4L1622 1282L1626.6 1277.4" fill="none" stroke="#cdcdcd" stroke-width="2"/>
<path d="M1640.6 1280.6L1651.8 1269.4" stroke="#3d78b8" stroke-width="3.6" stroke-linecap="round"/>
<path d="M1650.4 1270.8C1648.8 1267 1650 1262.6 1653.8 1260.8C1655.6 1260 1657.4 1259.8 1659 1260.2L1655.2 1264.2L1656.2 1267.4L1659.4 1268.4L1663.2 1264.6C1663.6 1266.4 1663.4 1268.2 1662.6 1270C1660.8 1273.8 1656.4 1275 1652.6 1273.4Z" fill="#3d78b8"/>
<circle cx="1641.8" cy="1279.4" r="1" fill="#fff"/>
</svg>
</div>
<div class="a" style="left:0px;top:1298.5px;width:1696px;height:14px;background:linear-gradient(#efefef,#fff)"></div>
<div class="t" style="left:3.00px;top:1309.00px;font-size:15.4px;color:#111;transform:scaleX(0.9811);transform-origin:0 0;">Klicken Sie zum Füllen einer Auswahl in der Primärfarbe mit der linken Maustaste, oder zum Füllen in der Sekundärfarbe mit der rechten Maustaste</div>
<div class="t" style="left:1031.80px;top:1308.00px;font-size:18.2px;color:#111;transform:scaleX(0.9529);transform-origin:0 0;">1696 × 1333</div>
<div class="t" style="left:1194.20px;top:1308.00px;font-size:18.2px;color:#111;transform:scaleX(0.9509);transform-origin:0 0;">694, -3</div>
<div class="t" style="left:1337.00px;top:1308.00px;font-size:18.2px;color:#111;transform:scaleX(0.9158);transform-origin:0 0;">px</div>
<div class="t" style="left:1393.80px;top:1308.00px;font-size:18.2px;color:#111;transform:scaleX(0.9306);transform-origin:0 0;">84%</div>
<svg style="left:1000px;top:1298px" width="696" height="35" viewBox="1000 1298 696 35">
<path d="M1006.5 1310.4H1013.6V1303.3M1029.5 1303.3V1310.4M1006.5 1326.2H1013" fill="none" stroke="#6b6b6b" stroke-width="1.3"/>
<path d="M1016.5 1306.6H1026.5M1023.2 1303.4L1026.6 1306.6L1023.2 1309.8M1009.4 1313.2V1323.2M1006.3 1320L1009.4 1323.2L1012.6 1320" fill="none" stroke="#3d78b8" stroke-width="1.6"/>
<path d="M1015.6 1312.6H1023.2L1027.7 1317.1V1326H1015.6Z" fill="#fff" stroke="#6b6b6b" stroke-width="1.4"/><path d="M1023 1312.6V1317.3H1027.7" fill="none" stroke="#6b6b6b" stroke-width="1.2"/>
<path d="M1170 1309.4H1192M1176.5 1303.3V1325.7" stroke="#6b6b6b" stroke-width="1" stroke-dasharray="1 1.4"/>
<path d="M1176.5 1305.8V1313M1172.9 1309.4H1180.1" stroke="#3d78b8" stroke-width="1.5"/>
<path d="M1179.4 1312.6H1187L1191.5 1317.1V1326H1179.4Z" fill="#fff" stroke="#6b6b6b" stroke-width="1.4"/><path d="M1186.8 1312.6V1317.3H1191.5" fill="none" stroke="#6b6b6b" stroke-width="1.2"/>
<path d="M1369 1317.8H1379L1374 1313.1Z" fill="#000"/>
<rect x="1448.6" y="1309.2" width="14.4" height="13" fill="#fff" stroke="#6b6b6b" stroke-width="1.5"/>
<path d="M1450.4 1320.6L1453.8 1315.8L1456 1318L1458.6 1314.4L1461.4 1320.6Z" fill="#3d78b8"/><circle cx="1453.6" cy="1312.6" r="1" fill="#c8c8c8"/>
<path d="M1444.6 1304.6L1449.2 1309.2M1467.4 1304.6L1462.8 1309.2M1444.6 1327.2L1449.2 1323M1467.4 1327.2L1462.8 1323" stroke="#3d78b8" stroke-width="1.4"/>
<path d="M1445.6 1309H1449.4V1305.2M1466.4 1309H1462.6V1305.2M1445.6 1322.8H1449.4V1326.6M1466.4 1322.8H1462.6V1326.6" fill="none" stroke="#3d78b8" stroke-width="1.4"/>
<circle cx="1487.4" cy="1314" r="7.3" fill="#fff" stroke="#777" stroke-width="2.4"/><path d="M1492.8 1319.4L1500.6 1326.4" stroke="#777" stroke-width="3.2"/>
<path d="M1482.6 1313.8H1492.2" stroke="#3d78b8" stroke-width="1.5"/>
<rect x="1510.6" y="1313" width="131.8" height="1" fill="#777"/>
<defs><linearGradient id="th" x1="0" y1="0" x2="0" y2="1"><stop offset="0" stop-color="#f6f6f6"/><stop offset=".55" stop-color="#e4e4e4"/><stop offset=".56" stop-color="#d4d4d4"/><stop offset="1" stop-color="#dcdcdc"/></linearGradient></defs>
<path d="M1572.2 1304.6H1582.2C1583 1304.6 1583.6 1305.2 1583.6 1306V1320.6L1577.2 1326.4L1570.8 1320.6V1306C1570.8 1305.2 1571.4 1304.6 1572.2 1304.6Z" fill="url(#th)" stroke="#8a8a8a" stroke-width="1"/>
<circle cx="1664.7" cy="1313.9" r="7.3" fill="#fff" stroke="#777" stroke-width="2.4"/><path d="M1670.1 1319.3L1677.9 1326.3" stroke="#777" stroke-width="3.2"/>
<path d="M1659.9 1313.8H1669.5M1664.7 1309V1318.6" stroke="#3d78b8" stroke-width="1.5"/>
<rect x="1690.0" y="1318.8" width="1.6" height="1.6" fill="#8a8a8a"/>
<rect x="1690.0" y="1323.0" width="1.6" height="1.6" fill="#8a8a8a"/>
<rect x="1686.2" y="1323.0" width="1.6" height="1.6" fill="#8a8a8a"/>
<rect x="1690.0" y="1327.1000000000001" width="1.6" height="1.6" fill="#8a8a8a"/>
<rect x="1686.2" y="1327.1000000000001" width="1.6" height="1.6" fill="#8a8a8a"/>
<rect x="1682.4" y="1327.1000000000001" width="1.6" height="1.6" fill="#8a8a8a"/>
</svg>
</body></html>
